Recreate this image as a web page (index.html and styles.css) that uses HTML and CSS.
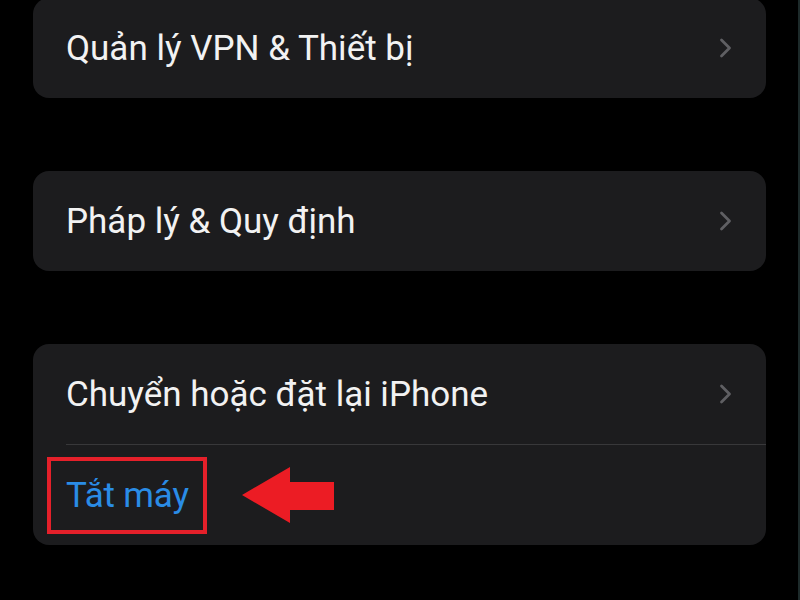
FILE: index.html
```html
<!DOCTYPE html>
<html lang="vi">
<head>
    <meta charset="UTF-8">
    <meta name="viewport" content="width=device-width, initial-scale=1.0">
    <title>Cài đặt chung</title>
    <link rel="stylesheet" href="styles.css">
</head>
<body>
    <div class="danh-sach">
        <div class="nhom">
            <div class="dong">
                <span class="nhan">Quản lý VPN &amp; Thiết bị</span>
                <svg class="mui-ten" viewBox="0 0 14 22"><path d="M3 3 L11 11 L3 19"/></svg>
            </div>
        </div>

        <div class="nhom">
            <div class="dong">
                <span class="nhan">Pháp lý &amp; Quy định</span>
                <svg class="mui-ten" viewBox="0 0 14 22"><path d="M3 3 L11 11 L3 19"/></svg>
            </div>
        </div>

        <div class="nhom">
            <div class="dong">
                <span class="nhan">Chuyển hoặc đặt lại iPhone</span>
                <svg class="mui-ten" viewBox="0 0 14 22"><path d="M3 3 L11 11 L3 19"/></svg>
            </div>
            <div class="ke"></div>
            <div class="dong dong-tat">
                <span class="khung-do"><span class="nhan xanh">Tắt máy</span></span>
                <svg class="chi-dan" viewBox="0 0 92 56"><polygon points="0,28 48,0 48,15 92,15 92,43 48,43 48,56"/></svg>
            </div>
        </div>
    </div>
</body>
</html>
```

FILE: styles.css
```css
* {
    margin: 0;
    padding: 0;
    box-sizing: border-box;
}
body {
    background: #000;
    font-family: Roboto, 'Noto Sans', sans-serif;
    width: 800px;
    height: 600px;
    overflow: hidden;
    border-right: 2px solid #1d2a2a;
}
.danh-sach {
    display: flex;
    flex-direction: column;
    gap: 73px;
    padding: 0 32px 0 33px;
    margin-top: -2px;
}
.nhom {
    background: #1c1c1e;
    border-radius: 16px;
}
.dong {
    height: 100px;
    display: flex;
    align-items: center;
    padding: 0 33px 0 33px;
}
.nhan {
    flex: 1;
    color: #f2f2f2;
    font-size: 35px;
    letter-spacing: 0;
}
.mui-ten {
    width: 15px;
    height: 22px;
    fill: none;
    stroke: #5f5f63;
    stroke-width: 2.8;
    stroke-linecap: round;
    stroke-linejoin: round;
}
.ke {
    height: 1px;
    background: #38383a;
    margin-left: 33px;
}
.dong-tat {
    padding-left: 14px;
}
.khung-do {
    display: flex;
    align-items: center;
    height: 77px;
    padding: 0 14px 0 15px;
    border: 4px solid #e5202a;
}
.xanh {
    flex: none;
    color: #2a8ce6;
    letter-spacing: -0.2px;
}
.chi-dan {
    width: 92px;
    height: 56px;
    margin-left: 35px;
    fill: #ec1c24;
}
```
